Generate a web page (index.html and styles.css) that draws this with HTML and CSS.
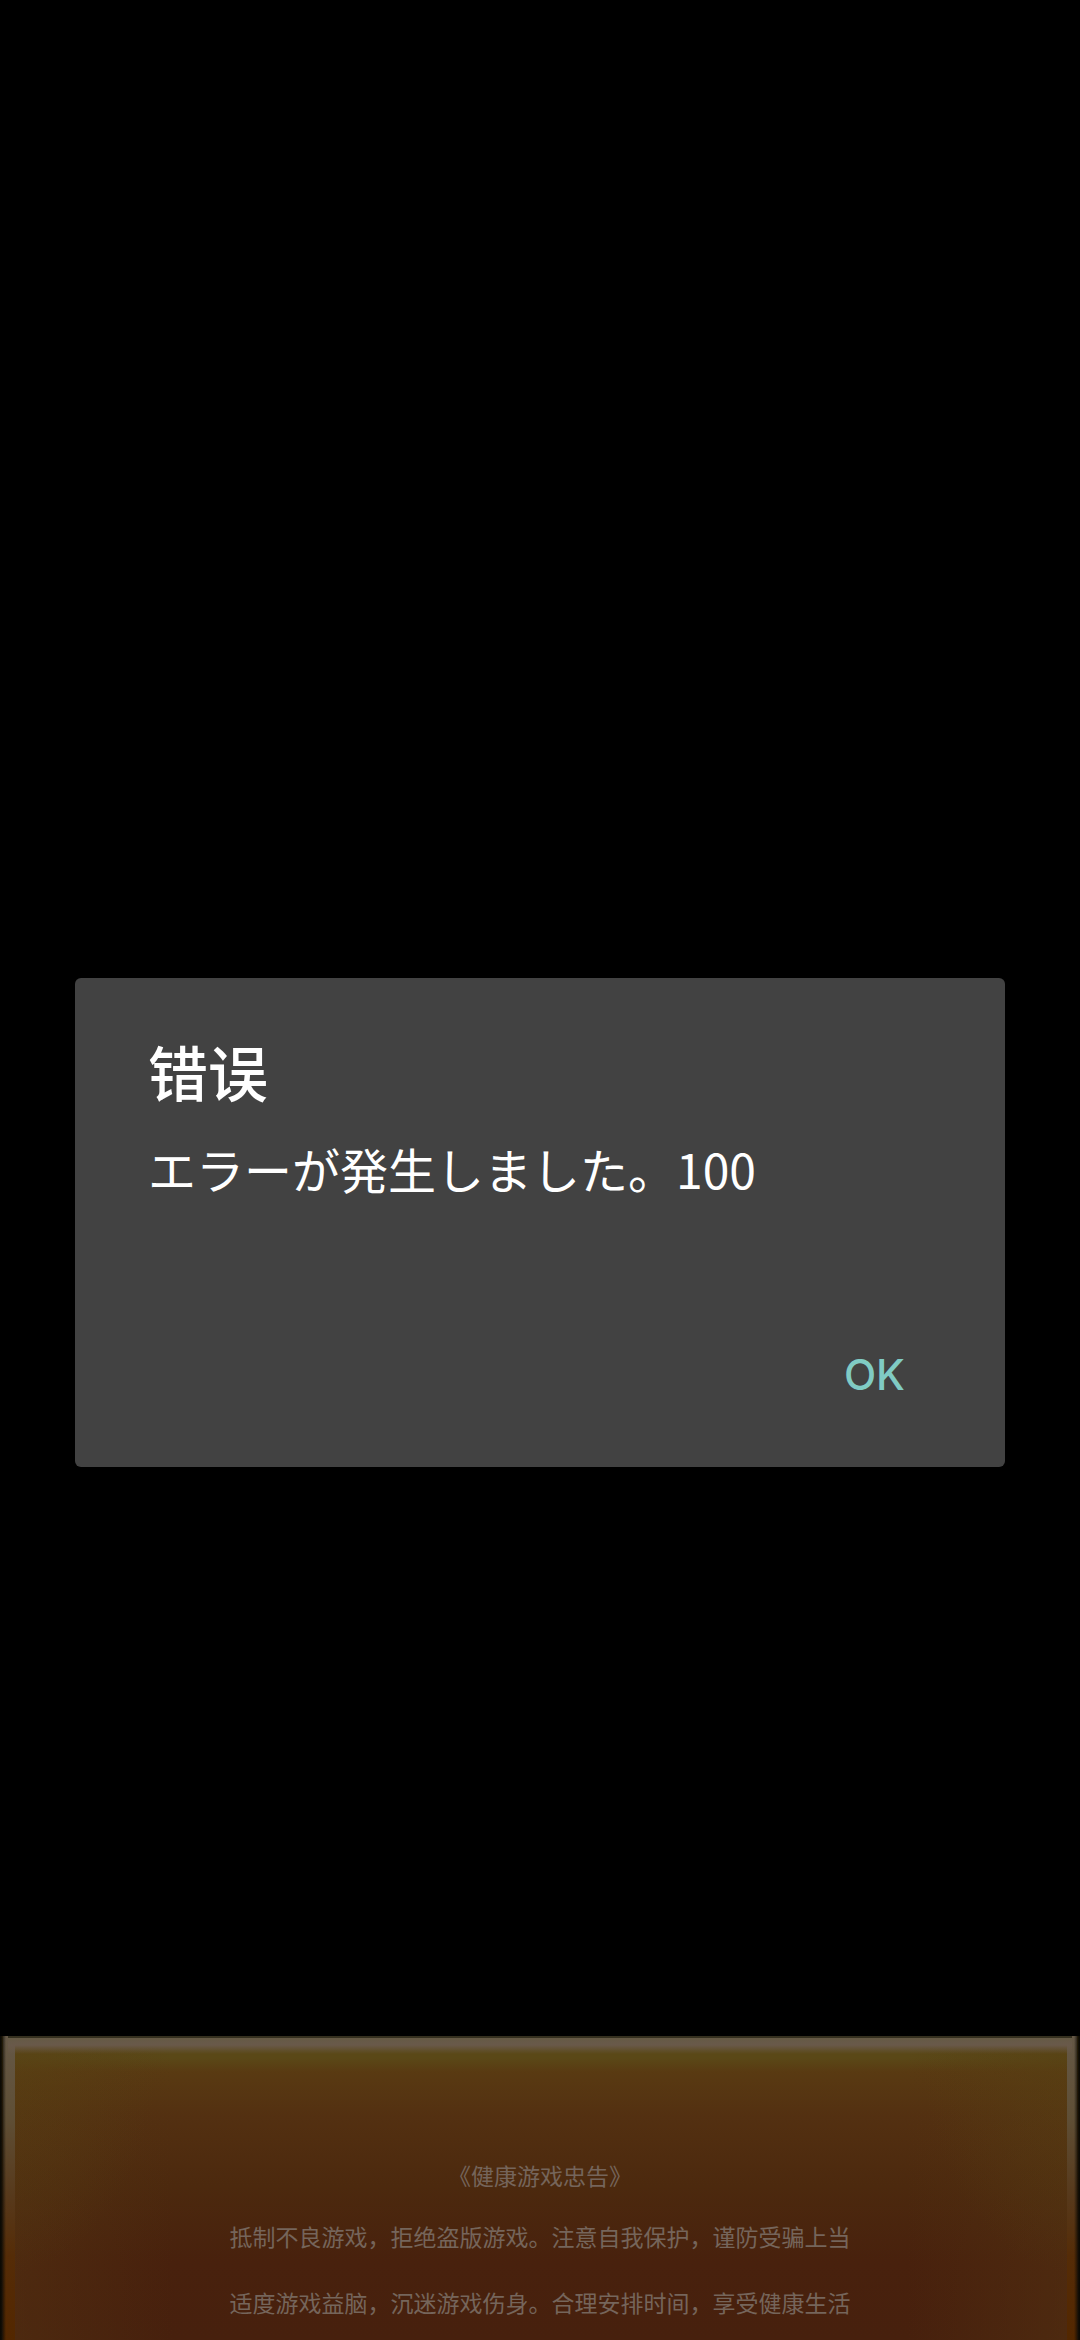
FILE: index.html
```html
<!DOCTYPE html>
<html lang="zh-CN">
<head>
    <meta charset="UTF-8">
    <meta name="viewport" content="width=device-width, initial-scale=1.0">
    <title>错误</title>
    <link rel="stylesheet" href="styles.css">
</head>
<body>
    <footer class="notice">
        <p class="notice-title">《健康游戏忠告》</p>
        <p>抵制不良游戏，拒绝盗版游戏。注意自我保护，谨防受骗上当</p>
        <p>适度游戏益脑，沉迷游戏伤身。合理安排时间，享受健康生活</p>
    </footer>

    <div class="overlay">
        <div class="dialog" role="alertdialog" aria-labelledby="dialogTitle" aria-describedby="dialogMessage">
            <h1 id="dialogTitle">错误</h1>
            <p id="dialogMessage" class="message" lang="ja">エラーが発生しました。100</p>
            <div class="actions">
                <button type="button">OK</button>
            </div>
        </div>
    </div>
</body>
</html>
```

FILE: styles.css
```css
* {
    box-sizing: border-box;
}
body {
    margin: 0;
    min-height: 100vh;
    display: flex;
    flex-direction: column;
    justify-content: flex-end;
    background: #000;
    font-family: "Noto Sans CJK SC", sans-serif;
}
h1, p {
    margin: 0;
}

/* health notice panel at the bottom */
.notice {
    position: relative;
    padding: 106px 24px 5px;
    color: #75655b;
    font-size: 23px;
    line-height: 66px;
    text-align: center;
    background:
        radial-gradient(160px 240px at 0 0, rgba(92, 80, 20, 0.3), rgba(92, 80, 20, 0)),
        radial-gradient(160px 240px at 100% 0, rgba(92, 80, 20, 0.3), rgba(92, 80, 20, 0)),
        linear-gradient(to right, rgba(84, 52, 18, 0.5), rgba(84, 52, 18, 0) 16%, rgba(84, 52, 18, 0) 84%, rgba(84, 52, 18, 0.5)),
        linear-gradient(#5a4817 22px, #593a12 36px, #533011 80px, #4c290e 150px, #48210d 225px, #47200d);
}
.notice-title {
    margin-bottom: -5px;
}
/* worn light frame round the panel */
.notice::before {
    content: '';
    position: absolute;
    inset: 0;
    background:
        linear-gradient(#35301f 2px, #655a45 2px, #69594a 9px, rgba(105, 90, 60, 0)) 8px 0 / calc(100% - 16px) 18px no-repeat,
        linear-gradient(to right, #0c0a04 1px, rgba(12, 10, 4, 0) 6px) left / 6px 100% no-repeat,
        linear-gradient(to left, #0c0a04 1px, rgba(12, 10, 4, 0) 6px) right / 6px 100% no-repeat,
        linear-gradient(#655846, #5f4f36 80px, #57391b 160px, #552c07 220px, #532700) 3px 0 / 12px 100% no-repeat,
        linear-gradient(#655846, #5f4f36 80px, #57391b 160px, #552c07 220px, #532700) calc(100% - 3px) 0 / 10px 100% no-repeat;
}
.notice p {
    position: relative;
}

.overlay {
    position: fixed;
    inset: 0;
    display: flex;
    align-items: center;
    padding: 105px 75px 0;
}
.dialog {
    flex: 1;
    padding: 49px 73px 39px;
    border-radius: 6px;
    background: #424242;
    color: #fff;
}
.dialog h1 {
    font-size: 60px;
    font-weight: 500;
    line-height: 88px;
}
.message {
    margin-top: 18px;
    font-family: "Noto Sans CJK JP", sans-serif;
    font-size: 48px;
    line-height: 70px;
}
.actions {
    display: flex;
    justify-content: flex-end;
    margin-top: 117px;
}
.actions button {
    height: 108px;
    padding: 0 27px;
    border: 0;
    background: none;
    color: #80cbc4;
    font-family: Inter, sans-serif;
    font-size: 42px;
    font-weight: 500;
}
```
